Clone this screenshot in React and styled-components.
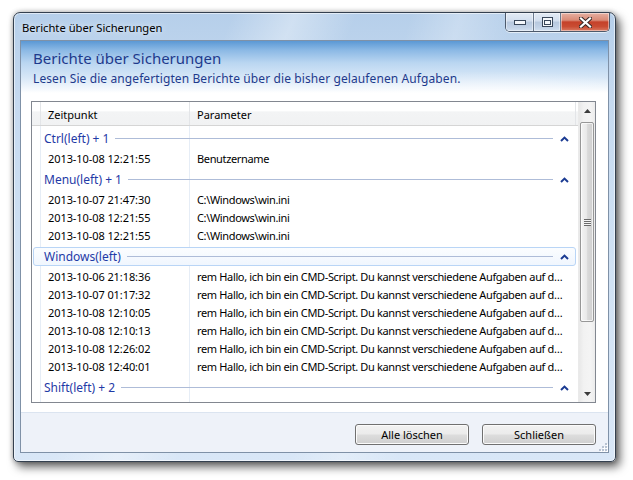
import React from 'react';
import styled, { createGlobalStyle } from 'styled-components';

const FONT = `"Noto Sans", "Open Sans", "DejaVu Sans", sans-serif`;

const Global = createGlobalStyle`
  html, body { margin: 0; padding: 0; background: #ffffff; }
  body { font-family: ${FONT}; -webkit-font-smoothing: antialiased; }
  * { box-sizing: border-box; }
`;

const Page = styled.div`
  width: 633px;
  height: 480px;
  padding: 12px 0 0 13px;
  overflow: hidden;
`;

const Window = styled.div`
  width: 603px;
  height: 450px;
  border: 1px solid #34404f;
  border-radius: 7px 7px 5px 5px;
  background:
    linear-gradient(112deg, rgba(255,255,255,0) 28%, rgba(255,255,255,0.35) 36%, rgba(255,255,255,0) 44%),
    linear-gradient(105deg, rgba(255,255,255,0) 55%, rgba(255,255,255,0.25) 62%, rgba(255,255,255,0) 70%),
    linear-gradient(180deg, #b6cfea 0%, #c6daf0 20%, #d1e2f4 60%, #d9e7f7 100%);
  box-shadow: 4px 5px 10px rgba(0,0,0,0.6), 0 0 5px rgba(0,0,0,0.3), inset 0 0 0 1px rgba(255,255,255,0.55);
  display: flex;
  flex-direction: column;
  padding: 0 6px 8px 6px;
`;

const TitleBar = styled.div`
  height: 27px;
  display: flex;
  align-items: flex-start;
`;

const TitleText = styled.div`
  padding: 7px 0 0 2px;
  font-size: 11.2px;
  line-height: 15px;
  color: #000;
  text-shadow: 0 0 6px rgba(255,255,255,0.9);
`;

const CaptionGroup = styled.div`
  margin-left: auto;
  margin-right: -1px;
  display: flex;
  height: 19px;
  border: 1px solid #4d5a6c;
  border-top: none;
  border-radius: 0 0 5px 5px;
  overflow: hidden;
  box-shadow: 0 1px 0 rgba(255,255,255,0.6);
`;

const CapBtn = styled.div`
  width: ${p => p.$w}px;
  height: 100%;
  display: flex;
  align-items: center;
  justify-content: center;
  border-left: ${p => (p.$first ? 'none' : '1px solid #6b7a8e')};
  background: ${p =>
    p.$close
      ? 'linear-gradient(180deg, #e6b0a2 0%, #d98a76 40%, #c5412a 50%, #c94c33 75%, #d97a62 100%)'
      : 'linear-gradient(180deg, #e3ebf5 0%, #d2deee 45%, #b7c8de 50%, #c2d2e7 80%, #d2e0f0 100%)'};
  box-shadow: inset 0 0 0 1px rgba(255,255,255,0.45);
`;

const Client = styled.div`
  flex: 1;
  border: 1px solid #7f91a7;
  background: #fff;
  display: flex;
  flex-direction: column;
  overflow: hidden;
`;

const Header = styled.div`
  height: 52px;
  padding: 7px 0 0 12px;
  background:
    radial-gradient(ellipse 260px 40px at 470px 58px, rgba(255,255,255,0.55), rgba(255,255,255,0) 70%),
    linear-gradient(180deg, #5b98d5 0%, #8cb9e5 18%, #bad6f1 42%, #d7e7f7 70%, #f3f8fd 92%, #ffffff 100%);
`;

const HeaderTitle = styled.div`
  font-size: 15px;
  line-height: 20px;
  color: #1e3a8c;
`;

const HeaderSub = styled.div`
  margin-top: 3px;
  font-size: 12px;
  line-height: 16px;
  letter-spacing: 0.1px;
  color: #1e3a8c;
`;

const Body = styled.div`
  flex: 1;
  padding: 8px 12px 9px 10px;
  display: flex;
`;

const ListBox = styled.div`
  flex: 1;
  border: 1px solid #828790;
  display: flex;
  overflow: hidden;
`;

const Columns = styled.div`
  flex: 1;
  display: flex;
  flex-direction: column;
  overflow: hidden;
`;

const HeadRow = styled.div`
  height: 24px;
  flex: none;
  display: flex;
  border-bottom: 1px solid #d5d5d5;
  background: linear-gradient(180deg, #ffffff 0%, #ffffff 40%, #f3f4f5 42%, #f1f2f3 100%);
`;

const HeadCell = styled.div`
  width: ${p => (p.$w ? `${p.$w}px` : 'auto')};
  flex: ${p => (p.$w ? 'none' : '1')};
  border-right: ${p => (p.$last ? 'none' : '1px solid #e3e5e8')};
  padding: 2px 0 0 7px;
  font-size: 11px;
  line-height: 22px;
  color: #000;
  white-space: nowrap;
`;

const Rows = styled.div`
  flex: 1;
  background-image:
    linear-gradient(90deg, transparent 8px, #e6edf6 8px, #e6edf6 9px, transparent 9px),
    linear-gradient(90deg, transparent 157px, #e6edf6 157px, #e6edf6 158px, transparent 158px);
`;

const GroupRow = styled.div`
  height: 23px;
  padding: 3px 2px 1px 1px;
`;

const GroupBox = styled.div`
  height: 19px;
  display: flex;
  align-items: center;
  padding-left: 10px;
  border: 1px solid ${p => (p.$active ? '#b9d5f6' : 'transparent')};
  border-radius: 3px;
  background: ${p => (p.$active ? 'linear-gradient(180deg, #fbfdff 0%, #f0f6fe 100%)' : 'transparent')};
`;

const GroupLabel = styled.span`
  font-size: 12px;
  color: #1f3aa6;
  white-space: nowrap;
`;

const GroupLine = styled.div`
  flex: 1;
  height: 1px;
  margin-left: 6px;
  background: #aebcd8;
`;

const Chevron = styled.div`
  width: 22px;
  display: flex;
  justify-content: center;
  align-items: center;
`;

const ItemRow = styled.div`
  height: 18px;
  display: grid;
  grid-template-columns: 9px 149px 1fr;
  align-items: center;
  font-size: 11px;
  color: #000;
`;

const Cell = styled.div`
  grid-column: ${p => p.$col};
  padding-left: 7px;
  white-space: nowrap;
  overflow: hidden;
  letter-spacing: ${p => (p.$tight ? '-0.35px' : '-0.08px')};
`;

const ScrollBar = styled.div`
  width: 17px;
  flex: none;
  display: flex;
  flex-direction: column;
  background: linear-gradient(90deg, #e8e8e8 0%, #f2f2f2 30%, #f4f4f4 70%, #ececec 100%);
  border-left: 1px solid #eaeaea;
`;

const ScrollBtn = styled.div`
  height: 17px;
  flex: none;
  display: flex;
  align-items: center;
  justify-content: center;
`;

const Track = styled.div`
  flex: 1;
  padding: 3px 1px 0 1px;
`;

const Thumb = styled.div`
  height: 200px;
  border: 1px solid #979797;
  border-radius: 2px;
  background: linear-gradient(90deg, #f3f3f3 0%, #eaeaea 45%, #dadada 55%, #cfcfcf 100%);
  box-shadow: inset 0 0 0 1px rgba(255,255,255,0.7);
  display: flex;
  align-items: center;
  justify-content: center;
`;

const Grip = styled.div`
  width: 7px;
  height: 7px;
  background: repeating-linear-gradient(180deg, #6b6b6b 0px, #6b6b6b 1px, #f4f4f4 1px, #f4f4f4 2px);
`;

const Footer = styled.div`
  height: 40px;
  flex: none;
  position: relative;
  border-top: 1px solid #dbe4f0;
  background: #eef2f9;
  display: flex;
  justify-content: flex-end;
  gap: 13px;
  padding: 11px 12px 0 0;
`;

const Button = styled.div`
  width: 114px;
  height: 21px;
  border: 1px solid #707070;
  border-radius: 3px;
  background: linear-gradient(180deg, #f2f2f2 0%, #ebebeb 48%, #dddddd 52%, #cfcfcf 100%);
  box-shadow: inset 0 0 0 1px #fbfbfb;
  display: flex;
  align-items: center;
  justify-content: center;
  font-size: 11px;
  color: #000;
`;

const SizeGrip = styled.div`
  position: absolute;
  right: 0;
  bottom: 0;
  width: 11px;
  height: 11px;
  display: flex;
`;

const ChevronIcon = () => (
  <svg width="9" height="6" viewBox="0 0 9 6">
    <polyline points="1,5 4.5,1.6 8,5" fill="none" stroke="#1b3b92" strokeWidth="2" />
  </svg>
);

const TriUp = () => (
  <svg width="7" height="4" viewBox="0 0 7 4"><polygon points="0,4 3.5,0 7,4" fill="#3c3c3c" /></svg>
);
const TriDown = () => (
  <svg width="7" height="4" viewBox="0 0 7 4"><polygon points="0,0 3.5,4 7,0" fill="#3c3c3c" /></svg>
);

const MinIcon = () => (
  <svg width="12" height="6" viewBox="0 0 12 6">
    <rect x="0.5" y="1.5" width="11" height="4" fill="#f4f7fb" stroke="#39475a" />
  </svg>
);
const MaxIcon = () => (
  <svg width="11" height="10" viewBox="0 0 11 10">
    <rect x="0.5" y="0.5" width="10" height="9" fill="#f4f7fb" stroke="#39475a" />
    <rect x="2.5" y="3.5" width="6" height="4" fill="none" stroke="#39475a" />
  </svg>
);
const CloseIcon = () => (
  <svg width="13" height="11" viewBox="0 0 13 11">
    <path d="M2,1.5 L11,9.5 M11,1.5 L2,9.5" stroke="#3b2a28" strokeWidth="4.2" strokeLinecap="square" />
    <path d="M2,1.5 L11,9.5 M11,1.5 L2,9.5" stroke="#ffffff" strokeWidth="2.2" strokeLinecap="square" />
  </svg>
);

const GripIcon = () => (
  <svg width="11" height="11" viewBox="0 0 11 11">
    {[[8, 2], [5, 5], [8, 5], [2, 8], [5, 8], [8, 8]].map(([x, y], i) => (
      <g key={i}>
        <rect x={x + 1} y={y + 1} width="2" height="2" fill="#ffffff" />
        <rect x={x} y={y} width="2" height="2" fill="#b8c3d2" />
      </g>
    ))}
  </svg>
);

const SCRIPT = 'rem Hallo, ich bin ein CMD-Script. Du kannst verschiedene Aufgaben auf d…';

const groups = [
  { label: 'Ctrl(left) + 1', items: [['2013-10-08 12:21:55', 'Benutzername']] },
  {
    label: 'Menu(left) + 1',
    items: [
      ['2013-10-07 21:47:30', 'C:\\Windows\\win.ini'],
      ['2013-10-08 12:21:55', 'C:\\Windows\\win.ini'],
      ['2013-10-08 12:21:55', 'C:\\Windows\\win.ini'],
    ],
  },
  {
    label: 'Windows(left)',
    active: true,
    items: [
      ['2013-10-06 21:18:36', SCRIPT],
      ['2013-10-07 01:17:32', SCRIPT],
      ['2013-10-08 12:10:05', SCRIPT],
      ['2013-10-08 12:10:13', SCRIPT],
      ['2013-10-08 12:26:02', SCRIPT],
      ['2013-10-08 12:40:01', SCRIPT],
    ],
  },
  { label: 'Shift(left) + 2', items: [] },
];

export default function App() {
  return (
    <Page>
      <Global />
      <Window>
        <TitleBar>
          <TitleText>Berichte über Sicherungen</TitleText>
          <CaptionGroup>
            <CapBtn $w={27} $first><MinIcon /></CapBtn>
            <CapBtn $w={27}><MaxIcon /></CapBtn>
            <CapBtn $w={49} $close><CloseIcon /></CapBtn>
          </CaptionGroup>
        </TitleBar>
        <Client>
          <Header>
            <HeaderTitle>Berichte über Sicherungen</HeaderTitle>
            <HeaderSub>Lesen Sie die angefertigten Berichte über die bisher gelaufenen Aufgaben.</HeaderSub>
          </Header>
          <Body>
            <ListBox>
              <Columns>
                <HeadRow>
                  <HeadCell $w={9} />
                  <HeadCell $w={149}>Zeitpunkt</HeadCell>
                  <HeadCell $w={386}>Parameter</HeadCell>
                  <HeadCell $last />
                </HeadRow>
                <Rows>
                  {groups.map(g => (
                    <React.Fragment key={g.label}>
                      <GroupRow>
                        <GroupBox $active={g.active}>
                          <GroupLabel>{g.label}</GroupLabel>
                          <GroupLine />
                          <Chevron><ChevronIcon /></Chevron>
                        </GroupBox>
                      </GroupRow>
                      {g.items.map(([t, p], i) => (
                        <ItemRow key={i}>
                          <Cell $col={2}>{t}</Cell>
                          <Cell $col={3} $tight>{p}</Cell>
                        </ItemRow>
                      ))}
                    </React.Fragment>
                  ))}
                </Rows>
              </Columns>
              <ScrollBar>
                <ScrollBtn><TriUp /></ScrollBtn>
                <Track>
                  <Thumb><Grip /></Thumb>
                </Track>
                <ScrollBtn><TriDown /></ScrollBtn>
              </ScrollBar>
            </ListBox>
          </Body>
          <Footer>
            <Button>Alle löschen</Button>
            <Button>Schließen</Button>
            <SizeGrip><GripIcon /></SizeGrip>
          </Footer>
        </Client>
      </Window>
    </Page>
  );
}
